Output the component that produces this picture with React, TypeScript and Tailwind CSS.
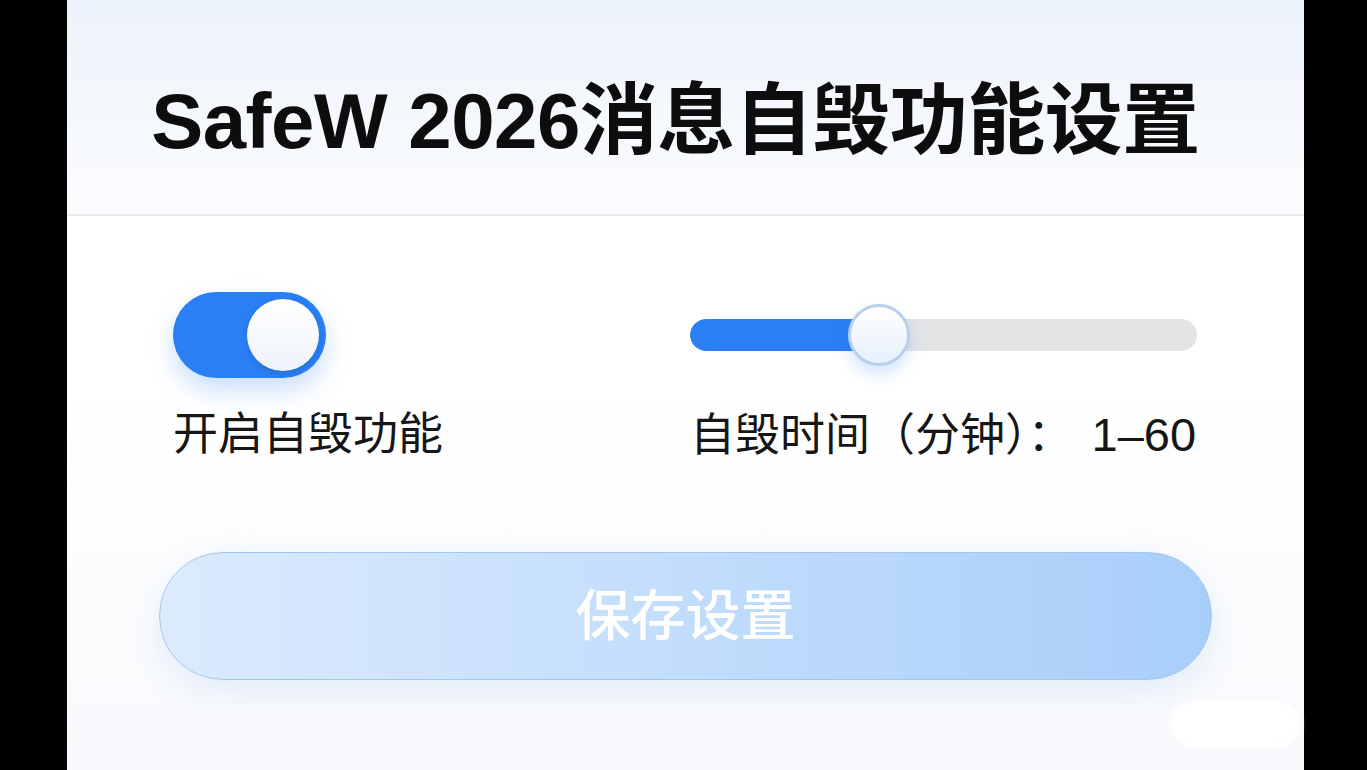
import { useState } from "react";

export default function App() {
  const [enabled, setEnabled] = useState(true);
  const [minutes, setMinutes] = useState(23);
  const pct = ((minutes - 1) / 59) * 100;

  return (
    <div
      className="flex h-[770px] w-full overflow-hidden bg-black"
      style={{ fontFamily: '"Liberation Sans", "Noto Sans CJK SC", sans-serif' }}
    >
      <div className="w-[67px] shrink-0" />

      <div className="relative flex w-[1237px] shrink-0 flex-col bg-gradient-to-b from-white via-white to-[#f7f9fc]">
        {/* Header */}
        <div className="flex h-[216px] items-center justify-center border-b-2 border-[#e8eaee] bg-gradient-to-b from-[#edf3fb] to-[#fbfcfe] pr-5 pt-7">
          <h1 className="text-[78px] font-bold tracking-[-0.5px] text-[#0d0d0d]">SafeW 2026消息自毁功能设置</h1>
        </div>

        {/* Controls */}
        <div className="flex pl-[106px] pr-[107px] pt-[76px]">
          <div className="flex w-[450px] flex-col">
            <div className="flex h-[86px] items-center">
              <button
                onClick={() => setEnabled(!enabled)}
                className={`flex h-[86px] w-[153px] items-center rounded-full px-[7px] shadow-[0_12px_24px_rgba(43,127,245,0.25)] ${
                  enabled ? "justify-end bg-[#2a7ff5]" : "justify-start bg-[#d9dde3]"
                }`}
              >
                <span className="h-[72px] w-[72px] rounded-full bg-gradient-to-b from-white to-[#eef3fa] shadow-[0_2px_6px_rgba(0,0,0,0.15)]" />
              </button>
            </div>
            <p className="mt-[29px] text-[45px] leading-[56px] text-[#161616]">开启自毁功能</p>
          </div>

          <div className="ml-auto flex w-[507px] flex-col">
            <div className="relative flex h-[86px] items-center">
              <div className="relative h-[32px] w-full overflow-hidden rounded-full bg-[#e3e4e6]">
                <div className="h-full rounded-full bg-[#2a7ff5]" style={{ width: `${pct}%` }} />
              </div>
              <div
                className="absolute top-1/2 h-[62px] w-[62px] -translate-x-1/2 -translate-y-1/2 rounded-full border-[3px] border-[#b9cfee] bg-gradient-to-b from-white to-[#e6f0fb] shadow-[0_8px_16px_rgba(43,127,245,0.2)]"
                style={{ left: `${pct}%` }}
              />
              <input
                type="range"
                min={1}
                max={60}
                value={minutes}
                onChange={(e) => setMinutes(Number(e.target.value))}
                className="absolute inset-0 h-full w-full cursor-pointer opacity-0"
              />
            </div>
            <p className="mt-[29px] whitespace-nowrap text-[45px] leading-[56px] text-[#161616]">
              自毁时间（分钟）：<span className="ml-[19px] text-[47px]">1–60</span>
            </p>
          </div>
        </div>

        {/* Save */}
        <div className="px-[92px] pt-[88px]">
          <button className="flex h-[128px] w-full items-center justify-center rounded-full border border-[#a3c6f0] bg-gradient-to-r from-[#dcebfd] to-[#a8cefa] shadow-[0_10px_30px_rgba(120,170,230,0.18)]">
            <span className="text-[55px] font-medium text-white">保存设置</span>
          </button>
        </div>

        <div className="absolute bottom-[24px] right-[4px] h-[44px] w-[130px] rounded-full bg-white blur-[3px]" />
      </div>

      <div className="flex-1" />
    </div>
  );
}
